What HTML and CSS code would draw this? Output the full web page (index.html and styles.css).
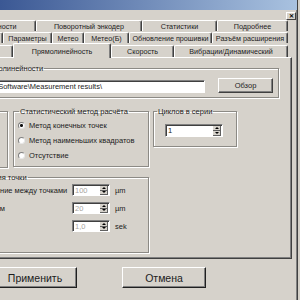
FILE: index.html
```html
<!DOCTYPE html>
<html lang="ru">
<head>
  <meta charset="UTF-8">
  <title>Настройки</title>
  <link rel="stylesheet" href="styles.css">
</head>
<body>
  <div class="window">
    <div class="titlebar"></div>
    <div class="caption-row">
      <span class="close-btn">✕</span>
    </div>

    <!-- tab rows, back to front -->
    <div class="tab-row row-1">
      <div class="tab w-69">Точности</div>
      <div class="tab w-106">Поворотный энкодер</div>
      <div class="tab w-75">Статистики</div>
      <div class="tab w-71">Подробнее</div>
    </div>
    <div class="tab-row row-2">
      <div class="tab w-53">Общие</div>
      <div class="tab w-49">Параметры</div>
      <div class="tab w-32">Метео</div>
      <div class="tab w-45">Метео(Б)</div>
      <div class="tab w-83">Обновление прошивки</div>
      <div class="tab w-76">Разъём расширения</div>
    </div>
    <div class="tab-row row-3">
      <div class="tab w-83">Угол</div>
      <div class="tab tab-active w-98">Прямолинейность</div>
      <div class="tab w-63">Скорость</div>
      <div class="tab w-114">Вибрации/Динамический</div>
    </div>

    <div class="panel">
      <fieldset class="group group-path">
        <legend>Папка результатов прямолинейности</legend>
        <div class="path-row">
          <div class="field path-field">C:\Program Files\Laser\Software\Measurement results\</div>
          <button class="btn btn-browse">Обзор</button>
        </div>
      </fieldset>

      <div class="group-row">
        <fieldset class="group group-stub"></fieldset>
        <fieldset class="group group-method">
          <legend>Статистический метод расчёта</legend>
          <label class="radio"><span class="radio-dot checked"></span>Метод конечных точек</label>
          <label class="radio"><span class="radio-dot"></span>Метод наименьших квадратов</label>
          <label class="radio"><span class="radio-dot"></span>Отсутствие</label>
        </fieldset>
        <fieldset class="group group-cycles">
          <legend>Циклов в серии</legend>
          <div class="spin spin-cycles">
            <span class="spin-value">1</span>
            <span class="spin-arrows"><span class="arrow up"></span><span class="arrow down"></span></span>
          </div>
        </fieldset>
      </div>

      <fieldset class="group group-point">
        <legend>Параметры измерения точки</legend>
        <div class="param-row">
          <span class="param-label">Расстояние между точками</span>
          <div class="spin spin-small disabled">
            <span class="spin-value">100</span>
            <span class="spin-arrows"><span class="arrow up"></span><span class="arrow down"></span></span>
          </div>
          <span class="unit">µm</span>
        </div>
        <div class="param-row">
          <span class="param-label">Минимум</span>
          <div class="spin spin-small disabled">
            <span class="spin-value">20</span>
            <span class="spin-arrows"><span class="arrow up"></span><span class="arrow down"></span></span>
          </div>
          <span class="unit">µm</span>
        </div>
        <div class="param-row">
          <span class="param-label">Время</span>
          <div class="spin spin-small disabled">
            <span class="spin-value">1,0</span>
            <span class="spin-arrows"><span class="arrow up"></span><span class="arrow down"></span></span>
          </div>
          <span class="unit">sek</span>
        </div>
      </fieldset>
    </div>

    <div class="button-row">
      <button class="btn btn-main">Применить</button>
      <button class="btn btn-main">Отмена</button>
    </div>
  </div>
</body>
</html>
```

FILE: styles.css
```css
body {
  margin: 0;
  width: 300px;
  height: 300px;
  overflow: hidden;
  background: #d4d0c8;
  font-family: "Liberation Sans", Arial, sans-serif;
  font-size: 7.5px;
  color: #1c1c1c;
}
.window {
  width: 298px;
  height: 300px;
  box-sizing: border-box;
  background: #d6d2cb;
  border-right: 1px solid #404040;
  box-shadow: inset -1px 0 #808080;
}
.titlebar {
  height: 10px;
  background: linear-gradient(to right, #3b5894, #a9c2e0);
}
.caption-row {
  height: 10px;
  display: flex;
  justify-content: flex-end;
  padding-right: 1px;
}
.close-btn {
  width: 10px;
  height: 8px;
  margin-top: 2px;
  box-sizing: border-box;
  border: 1px solid;
  border-color: #fff #404040 #404040 #fff;
  font-size: 6px;
  font-weight: bold;
  line-height: 6px;
  text-align: center;
  color: #000;
}

/* tabs */
.tab-row {
  display: flex;
  height: 11px;
  font-size: 7.2px;
}
.row-1 {
  margin-left: -33px;
}
.row-2 {
  margin-top: 1px;
  margin-left: -50px;
}
.row-3 {
  margin-top: 2px;
  height: 12px;
  margin-left: -70px;
}
.tab {
  box-sizing: border-box;
  height: 100%;
  border: 1px solid #fff;
  border-right-color: #404040;
  border-bottom: none;
  box-shadow: inset -1px 0 #808080;
  border-radius: 2px 2px 0 0;
  display: flex;
  align-items: center;
  justify-content: center;
  white-space: nowrap;
  overflow: hidden;
  flex-shrink: 0;
}
.tab-active {
  height: 15px;
  margin-top: -2px;
  position: relative;
  z-index: 1;
  background: #d6d2cb;
}
.w-32 { width: 32px; }
.w-45 { width: 45px; }
.w-49 { width: 49px; }
.w-53 { width: 53px; }
.w-63 { width: 63px; }
.w-69 { width: 69px; }
.w-71 { width: 71px; }
.w-75 { width: 75px; }
.w-76 { width: 76px; }
.w-83 { width: 83px; }
.w-98 { width: 98px; }
.w-106 { width: 106px; }
.w-114 { width: 114px; }

/* page */
.panel {
  margin-left: -5px;
  width: 297px;
  height: 202px;
  box-sizing: border-box;
  border-top: 1px solid #fff;
  border-right: 1px solid #404040;
  border-bottom: 1px solid #404040;
  box-shadow: inset -1px -1px #808080;
  padding-top: 6px;
}
.group {
  margin: 0;
  min-width: 0;
  box-sizing: border-box;
  border: 1px solid #8c8a85;
  box-shadow: 1px 1px 0 #fff, inset 1px 1px 0 #fff;
  padding: 0;
}
.group legend {
  padding: 0 1px;
  margin-left: 5px;
  line-height: 9px;
}
.group-path {
  margin-left: -93px;
  width: 377px;
  padding: 5px 5px 4px 5px;
}
.path-row {
  display: flex;
  align-items: flex-end;
}
.field {
  background: #fff;
  box-sizing: border-box;
  border: 1px solid;
  border-color: #808080 #fff #fff #808080;
  box-shadow: inset 1px 1px #404040;
  white-space: nowrap;
  overflow: hidden;
}
.path-field {
  flex: 1;
  height: 13px;
  line-height: 11px;
  padding-left: 10px;
}
.btn {
  background: #d6d2cb;
  box-sizing: border-box;
  border: 1px solid;
  border-color: #fff #404040 #404040 #fff;
  box-shadow: inset -1px -1px #808080;
  font-family: "Liberation Sans", Arial, sans-serif;
  color: #1c1c1c;
  padding: 0;
}
.btn-browse {
  width: 55px;
  height: 15px;
  margin-left: 13px;
  font-size: 7.5px;
}

.group-row {
  display: flex;
  align-items: flex-start;
  margin-top: 9px;
}
.group-stub {
  margin-left: -15px;
  margin-top: 4px;
  width: 28px;
  height: 57px;
}
.group-method {
  margin-left: 5px;
  width: 136px;
  padding: 2px 0 3px 0;
}
.group-cycles {
  margin-left: 4px;
  width: 84px;
  padding: 8px 0 9px 0;
}
.group-cycles legend {
  margin-left: 3px;
}
.radio {
  display: flex;
  align-items: center;
  height: 15px;
  margin-left: 4px;
}
.radio-dot {
  width: 7px;
  height: 7px;
  box-sizing: border-box;
  border-radius: 50%;
  background: #fff;
  border: 1px solid;
  border-color: #808080 #e8e8e8 #e8e8e8 #808080;
  margin-right: 4px;
}
.radio-dot.checked {
  background: radial-gradient(circle, #111 1.2px, #fff 1.8px);
}

.spin {
  display: flex;
  box-sizing: border-box;
  background: #fff;
  border: 1px solid;
  border-color: #808080 #fff #fff #808080;
  box-shadow: inset 1px 1px #404040;
}
.spin-cycles {
  width: 58px;
  height: 13px;
  margin-left: 11px;
}
.spin-small {
  width: 38px;
  height: 12px;
}
.spin-value {
  flex: 1;
  padding-left: 2px;
  padding-top: 1px;
  line-height: 9px;
}
.disabled .spin-value {
  color: #a8a59f;
}
.spin-arrows {
  width: 8px;
  display: flex;
  flex-direction: column;
  padding: 1px 1px 0 0;
}
.arrow {
  flex: 1;
  background: #d6d2cb;
  border: 1px solid;
  border-width: 0 1px 1px 0;
  border-color: #606060;
  display: flex;
  align-items: center;
  justify-content: center;
}
.arrow::before {
  content: "";
  border-left: 2px solid transparent;
  border-right: 2px solid transparent;
}
.arrow.up::before {
  border-bottom: 2px solid #000;
}
.arrow.down::before {
  border-top: 2px solid #000;
}

.group-point {
  margin-top: 5px;
  margin-left: -76px;
  width: 230px;
  padding: 2px 0 14px 0;
}
.param-row {
  display: flex;
  align-items: center;
  height: 12px;
  margin-bottom: 6px;
  margin-left: 52px;
}
.param-label {
  width: 100px;
  white-space: nowrap;
}
.unit {
  margin-left: 5px;
}

.button-row {
  display: flex;
  gap: 45px;
  margin-top: 8px;
  margin-left: -7px;
}
.btn-main {
  width: 84px;
  height: 21px;
  font-size: 10.5px;
  border-color: #fff #202020 #202020 #fff;
}
```
